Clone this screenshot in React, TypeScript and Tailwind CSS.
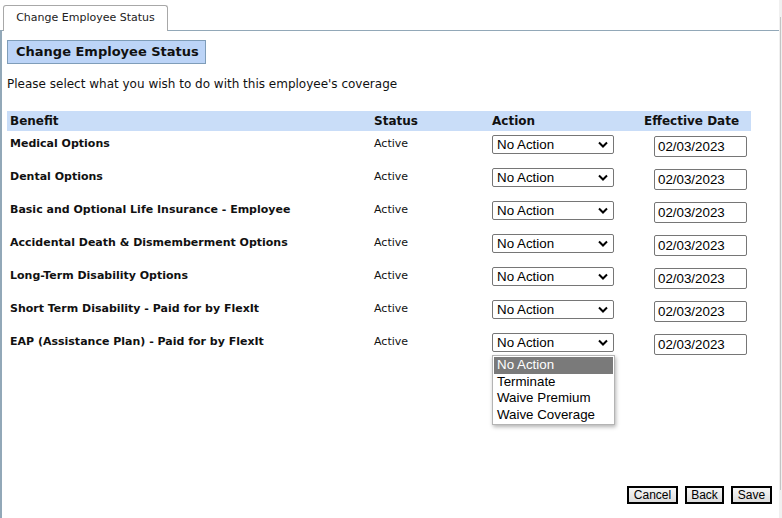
import {ReactElement} from "react";

type Benefit = {name: string; status: string; date: string};

const benefits: Benefit[] = [
    {name: "Medical Options", status: "Active", date: "02/03/2023"},
    {name: "Dental Options", status: "Active", date: "02/03/2023"},
    {name: "Basic and Optional Life Insurance - Employee", status: "Active", date: "02/03/2023"},
    {name: "Accidental Death & Dismemberment Options", status: "Active", date: "02/03/2023"},
    {name: "Long-Term Disability Options", status: "Active", date: "02/03/2023"},
    {name: "Short Term Disability - Paid for by FlexIt", status: "Active", date: "02/03/2023"},
    {name: "EAP (Assistance Plan) - Paid for by FlexIt", status: "Active", date: "02/03/2023"},
];

const options = ["No Action", "Terminate", "Waive Premium", "Waive Coverage"];

const buttons = [
    {label: "Cancel", width: "w-[51px]"},
    {label: "Back", width: "w-[39px]"},
    {label: "Save", width: "w-[41px]"},
];

const FakeSelect = ({open}: {open: boolean}): ReactElement => (
    <div className="relative w-[122px]">
        <div className="h-[19px] border border-[#767676] rounded-[2px] bg-white flex items-center justify-between pl-[4px] pr-[5px] text-[13.33px] leading-none text-black font-['Liberation_Sans',Arial,sans-serif]">
            <span>No Action</span>
            <svg width="10" height="7" viewBox="0 0 10 7">
                <path d="M1 1.5 L5 5.5 L9 1.5" stroke="#000" strokeWidth="2" fill="none" />
            </svg>
        </div>
        {open && (
            <div className="absolute left-0 top-[22px] w-[123px] bg-white border border-[#b4b4b4] shadow-[1px_2px_4px_rgba(0,0,0,0.3)] p-[1px] z-10 font-['Liberation_Sans',Arial,sans-serif] text-[13.33px] leading-[16.5px] text-black">
                {options.map((opt, i) => (
                    <div key={opt} className={"pl-[3px] h-[16.5px] " + (i == 0 ? "bg-[#7a7a7a] text-white" : "")}>
                        {opt}
                    </div>
                ))}
            </div>
        )}
    </div>
);

const App = (): ReactElement => {
    return (
        <div className="w-[782px] h-[518px] overflow-hidden bg-white flex font-['DejaVu_Sans',Verdana,sans-serif] text-[#111]">
            <div className="w-[779px] flex flex-col">
                {/* Tabs */}
                <div className="h-[30px] flex items-end pl-[3px]">
                    <div className="h-[26px] w-[165px] border border-b-0 border-[#a8a8a8] rounded-t-[3px] bg-white text-[11px] flex items-center justify-center text-[#222] relative top-[1px] whitespace-nowrap">
                        Change Employee Status
                    </div>
                </div>
                {/* Panel */}
                <div className="flex-1 border-t border-l-2 border-[#92a8b8] flex flex-col pl-[5px] pr-[28px]">
                    <div className="mt-[9px] self-start h-[24px] w-[199px] bg-[#bcd4f7] border border-[#7f9db9] flex items-center pl-[8px] text-[13px] font-bold text-[#111] whitespace-nowrap">
                        Change Employee Status
                    </div>
                    <p className="mt-[12px] text-[12px] leading-[17px]">
                        Please select what you wish to do with this employee's coverage
                    </p>
                    {/* Table */}
                    <div className="mt-[18px] flex flex-col">
                        <div className="h-[20px] bg-[#c9ddf8] flex items-center text-[12px] font-bold">
                            <div className="w-[364px] pl-[3px]">Benefit</div>
                            <div className="w-[118px] pl-[3px]">Status</div>
                            <div className="w-[151px] pl-[3px]">Action</div>
                            <div className="pl-[4px]">Effective Date</div>
                        </div>
                        {benefits.map((b, i) => (
                            <div key={b.name} className="h-[33px] flex items-start pt-[4px]">
                                <div className="w-[364px] pl-[3px] text-[11px] font-bold leading-[16px] pt-[1px]">{b.name}</div>
                                <div className="w-[118px] pl-[3px] text-[11px] leading-[16px] pt-[1px]">{b.status}</div>
                                <div className="w-[165px] pl-[3px]">
                                    <FakeSelect open={i == benefits.length - 1} />
                                </div>
                                <div className="pt-[1px]">
                                    <div className="w-[93px] h-[21px] border border-[#767676] rounded-[2px] flex items-center pl-[3px] text-[13.33px] text-black font-['Liberation_Sans',Arial,sans-serif]">
                                        {b.date}
                                    </div>
                                </div>
                            </div>
                        ))}
                    </div>
                    {/* Buttons */}
                    <div className="mt-auto mb-[14px] flex justify-end gap-[7px] -mr-[21px] font-['Liberation_Sans',Arial,sans-serif] text-[12px] text-black">
                        {buttons.map((btn) => (
                            <button key={btn.label} className={btn.width + " h-[18px] border-2 border-black bg-gradient-to-b from-[#f6f6f6] to-[#dcdcdc] leading-none"}>
                                {btn.label}
                            </button>
                        ))}
                    </div>
                </div>
            </div>
            {/* Scrollbar edge */}
            <div className="w-[3px] bg-[#f0f0f0] flex flex-col pt-[17px] pb-[28px]">
                <div className="flex-1 w-[1px] ml-[1px] bg-[#c4c4c4]" />
            </div>
        </div>
    );
};

export default App;
